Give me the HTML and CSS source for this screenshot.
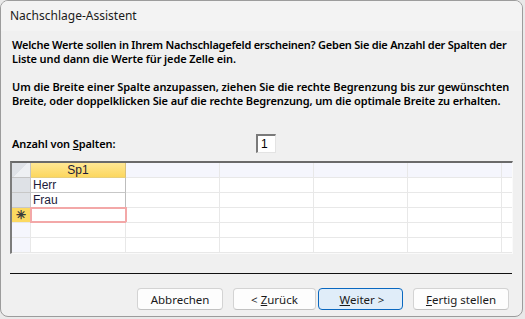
FILE: index.html
```html
<!DOCTYPE html>
<html lang="de">
<head>
<meta charset="utf-8">
<title>Nachschlage-Assistent</title>
<link rel="stylesheet" href="styles.css">
</head>
<body>
<div class="window">
  <div class="titlebar">Nachschlage-Assistent</div>
  <div class="content">
    <p class="intro"><span class="tight">Welche Werte sollen in Ihrem Nachschlagefeld erscheinen? Geben Sie die Anzahl der Spalten der</span><br>Liste und dann die Werte für jede Zelle ein.</p>
    <p class="intro second"><span class="loose">Um die Breite einer Spalte anzupassen, ziehen Sie die rechte Begrenzung bis zur gewünschten</span><br>Breite, oder doppelklicken Sie auf die rechte Begrenzung, um die optimale Breite zu erhalten.</p>
    <div class="count-row">
      <span class="count-label">Anzahl von <u>S</u>palten:</span>
      <span class="count-input">1</span>
    </div>
    <div class="grid">
      <div class="cell corner"></div>
      <div class="cell head-active">Sp1</div>
      <div class="cell head"></div>
      <div class="cell head"></div>
      <div class="cell head"></div>
      <div class="cell head"></div>
      <div class="cell head last"></div>

      <div class="cell sel sel-filled"></div>
      <div class="cell data filled">Herr</div>
      <div class="cell"></div>
      <div class="cell"></div>
      <div class="cell"></div>
      <div class="cell"></div>
      <div class="cell last"></div>

      <div class="cell sel sel-filled"></div>
      <div class="cell data filled">Frau</div>
      <div class="cell"></div>
      <div class="cell"></div>
      <div class="cell"></div>
      <div class="cell"></div>
      <div class="cell last"></div>

      <div class="cell sel sel-new">✳</div>
      <div class="cell data new"></div>
      <div class="cell"></div>
      <div class="cell"></div>
      <div class="cell"></div>
      <div class="cell"></div>
      <div class="cell last"></div>

      <div class="cell sel"></div>
      <div class="cell"></div>
      <div class="cell"></div>
      <div class="cell"></div>
      <div class="cell"></div>
      <div class="cell"></div>
      <div class="cell last"></div>

      <div class="cell sel"></div>
      <div class="cell"></div>
      <div class="cell"></div>
      <div class="cell"></div>
      <div class="cell"></div>
      <div class="cell"></div>
      <div class="cell last"></div>
    </div>
  </div>
  <div class="separator"></div>
  <div class="buttons">
    <button class="btn btn-cancel">Abbrechen</button>
    <button class="btn btn-back">&lt; <u>Z</u>urück</button>
    <button class="btn btn-next">&nbsp;<u>W</u>eiter &gt;</button>
    <button class="btn btn-finish"><u>F</u>ertig stellen</button>
  </div>
</div>
</body>
</html>
```

FILE: styles.css
```css
html, body {
  margin: 0;
  padding: 0;
}
body {
  width: 525px;
  height: 319px;
  background: #e9e9e9;
  font-family: "Noto Sans", "DejaVu Sans", sans-serif;
  color: #000;
  overflow: hidden;
}
.window {
  width: 523px;
  height: 317px;
  box-sizing: border-box;
  border: 1px solid #9c9c9c;
  border-radius: 8px;
  background: #f0f0f0;
  overflow: hidden;
  display: flex;
  flex-direction: column;
}
.titlebar {
  height: 30px;
  flex: none;
  background: #f3f3f3;
  font-size: 12px;
  line-height: 30px;
  padding-left: 9px;
  color: #1a1a1a;
}
.content {
  padding: 7px 9px 0 9px;
}
.intro {
  margin: 0;
  padding-left: 2px;
  font-size: 11px;
  font-weight: 600;
  line-height: 14px;
  letter-spacing: -0.12px;
  white-space: nowrap;
}
.intro .tight {
  letter-spacing: -0.23px;
}
.intro .loose {
  letter-spacing: -0.07px;
}
.intro.second {
  margin-top: 14px;
}
.count-row {
  margin-top: 26px;
  display: flex;
  align-items: center;
  height: 19px;
  padding-left: 2px;
}
.count-label {
  width: 244px;
  font-size: 11px;
  font-weight: 600;
  letter-spacing: -0.1px;
}
.count-input {
  width: 20px;
  height: 19px;
  box-sizing: border-box;
  background: #fff;
  border-top: 2px solid #7a7a7a;
  border-left: 2px solid #7a7a7a;
  border-right: 1px solid #e3e3e3;
  border-bottom: 1px solid #e3e3e3;
  font-family: "Liberation Sans", sans-serif;
  font-size: 12px;
  line-height: 16px;
  padding-left: 3px;
}
.grid {
  margin-top: 8px;
  width: 503px;
  box-sizing: border-box;
  border-top: 2px solid #6a6a6a;
  border-left: 2px solid #7c7c7c;
  border-right: 1px solid #fafafa;
  border-bottom: 1px solid #fafafa;
  display: grid;
  grid-template-columns: 19px 95px 94px 94px 94px 94px 10px;
  grid-auto-rows: 15px;
  background: #fff;
}
.cell {
  box-sizing: border-box;
  border-right: 1px solid #e8e8e8;
  border-bottom: 1px solid #e8e8e8;
  font-family: "Liberation Sans", sans-serif;
  font-size: 12px;
  line-height: 14px;
  color: #1b1b3a;
}
.cell.last {
  border-right: none;
}
.head {
  background: #f5f6fd;
}
.corner {
  background: linear-gradient(135deg, #dfe2e7 50%, #eef0f3 50%);
  border-right-color: #c4c4c4;
  border-bottom-color: #c4c4c4;
}
.head-active {
  background: linear-gradient(#ffe794, #fcd75e);
  text-align: center;
  border-right-color: #d9c07a;
  border-bottom-color: #e7cf7d;
}
.sel {
  background: #f5f6fd;
}
.sel-filled {
  background: #dee1e6;
  border-right-color: #c7c7c7;
  border-bottom-color: #c7c7c7;
}
.sel-new {
  background: #fcd961;
  font-size: 12px;
  font-weight: bold;
  text-align: center;
  color: #3a3a3a;
  border-right-color: #d0b760;
}
.data.filled {
  padding-left: 2px;
  border-right-color: #bdbdbd;
  border-bottom-color: #c7c7c7;
}
.data.new {
  border: 2px solid #f3a8a8;
  margin: -1px 0 0 -1px;
  width: 97px;
  height: 16px;
}
.separator {
  height: 1px;
  background: #111;
  margin: 19px 10px 0 9px;
}
.buttons {
  display: flex;
  justify-content: flex-end;
  padding-right: 13px;
  margin-top: 14px;
}
.btn {
  height: 22px;
  box-sizing: border-box;
  background: #fdfdfd;
  border: 1px solid #d3d3d3;
  border-bottom-color: #c2c2c2;
  border-radius: 4px;
  font-family: "Noto Sans", sans-serif;
  font-size: 11.5px;
  color: #1a1a1a;
  padding: 0;
}
.btn-cancel { width: 86px; margin-right: 10px; }
.btn-back { width: 83px; margin-right: 2px; }
.btn-next {
  width: 85px;
  margin-right: 10px;
  background: #e0edf9;
  border: 1px solid #0a68c0;
}
.btn-finish { width: 96px; }
```
